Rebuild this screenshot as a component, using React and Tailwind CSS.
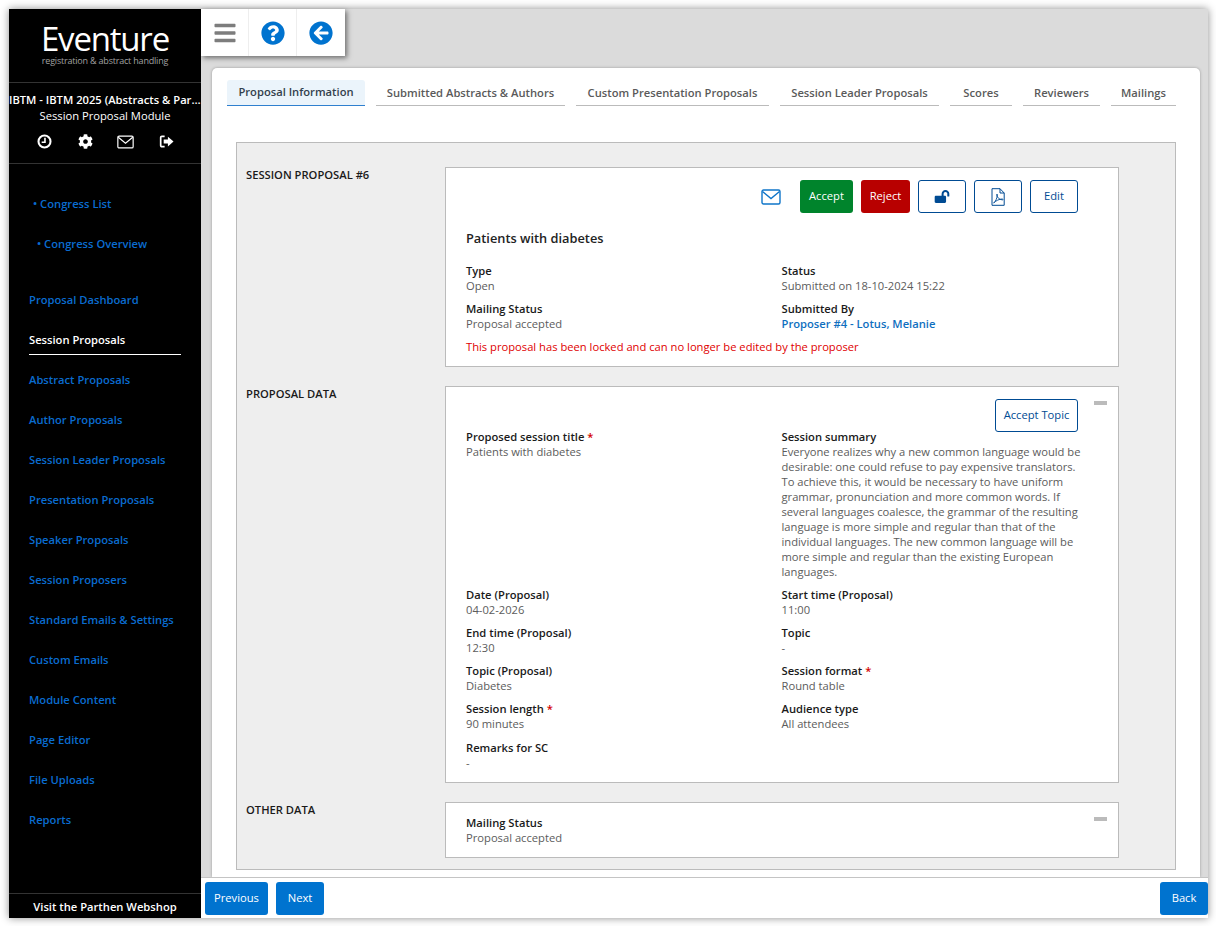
import React from "react";
import { FaBars, FaQuestionCircle, FaArrowCircleLeft, FaCog, FaLockOpen } from "react-icons/fa";

function Envelope({ className }) {
  return (
    <svg viewBox="0 0 20 16" className={className} fill="none" stroke="currentColor" strokeWidth="1.4">
      <rect x="1" y="1" width="18" height="14" rx="1.5" />
      <path d="M1.5 2.5 L10 9.5 L18.5 2.5" />
    </svg>
  );
}
function Clock({ className }) {
  return (
    <svg viewBox="0 0 16 16" className={className} fill="none" stroke="currentColor">
      <circle cx="8" cy="8" r="6.4" strokeWidth="2.2" />
      <path d="M8.5 4 V8.8 H5" strokeWidth="1.7" />
    </svg>
  );
}
function SignOut({ className }) {
  return (
    <svg viewBox="0 0 16 16" className={className}>
      <path d="M6 2.5 H3 A1.2 1.2 0 0 0 1.8 3.7 V12.3 A1.2 1.2 0 0 0 3 13.5 H6" fill="none" stroke="currentColor" strokeWidth="1.8" />
      <path d="M9.5 2.8 L15.5 8 L9.5 13.2 V10.2 H5 V5.8 H9.5 Z" fill="currentColor" />
    </svg>
  );
}
function Pdf({ className }) {
  return (
    <svg viewBox="0 0 14 18" className={className} fill="none" stroke="currentColor" strokeWidth="1">
      <path d="M1 .7 H9 L13.2 5 V17.3 H1 Z" />
      <path d="M9 .7 V5 H13.2" />
      <path d="M2.6 15 C4.6 13.6 6.2 10 6.3 6.8 C6.4 5.6 5.6 5.8 5.8 7 C6.2 9.6 8.4 11.8 11.6 11.9 C12.4 11.8 12.2 11 11.2 11 C8.4 11 5 12.6 2.6 15 Z" strokeWidth="0.9" />
    </svg>
  );
}

const nav = ["Proposal Dashboard", "Session Proposals", "Abstract Proposals", "Author Proposals", "Session Leader Proposals", "Presentation Proposals", "Speaker Proposals", "Session Proposers", "Standard Emails & Settings", "Custom Emails", "Module Content", "Page Editor", "File Uploads", "Reports"];
const tabs = [
  ["Submitted Abstracts & Authors", "w-[189px]"],
  ["Custom Presentation Proposals", "w-[193px]"],
  ["Session Leader Proposals", "w-[159px]"],
  ["Scores", "w-[62px]"],
  ["Reviewers", "w-[77px]"],
  ["Mailings", "w-[65px]"],
];

function Field({ label, req, children, className = "" }) {
  return (
    <div className={className}>
      <div className="font-semibold text-[#1a1a1a] leading-[15px]">
        {label}
        {req && <span className="text-[#d40000]"> *</span>}
      </div>
      <div className="text-[#5c5c5c] leading-[15px]">{children}</div>
    </div>
  );
}

function Section({ title, className, children }) {
  return (
    <div className="flex">
      <div className="w-[199px] font-semibold text-[#1a1a1a] leading-[15px] shrink-0">{title}</div>
      <div className={`relative w-[674px] bg-white border border-[#bbbbbb] ${className}`}>{children}</div>
    </div>
  );
}

export default function App() {
  return (
    <div className="w-[1216px] h-[926px] overflow-hidden bg-white p-[9px] text-[11.2px] font-['Open_Sans',sans-serif]">
      <div className="flex w-[1199px] h-[909px] shadow-[0_0_8px_rgba(0,0,0,0.45)]">
        <aside className="w-[192px] shrink-0 bg-black flex flex-col text-white">
          <div className="h-[74px] border-b border-[#333333] flex flex-col items-center pt-[12px]">
            <div className="text-[33px] leading-[36px] tracking-[-1.2px] font-medium text-white">Eventure</div>
            <div className="text-[9px] leading-[9px] mt-[-1px] text-[#a0a0a0] tracking-[-0.2px]">registration &amp; abstract handling</div>
          </div>
          <div className="h-[81px] border-b border-[#333333] flex flex-col items-center pt-[9px]">
            <div className="w-full text-center whitespace-nowrap overflow-hidden text-ellipsis font-semibold leading-[16px]">IBTM - IBTM 2025 (Abstracts &amp; Partners)</div>
            <div className="leading-[15px]">Session Proposal Module</div>
            <div className="flex w-full mt-[11px] pl-[15.5px] items-center">
              <div className="w-[40.5px] flex justify-center"><Clock className="w-[15px] h-[15px]" /></div>
              <div className="w-[40.5px] flex justify-center"><FaCog className="w-[15px] h-[15px]" /></div>
              <div className="w-[40.5px] flex justify-center"><Envelope className="w-[17px] h-[14px]" /></div>
              <div className="w-[40.5px] flex justify-center"><SignOut className="w-[15px] h-[15px]" /></div>
            </div>
          </div>
          <div className="pt-[20px] font-semibold text-[#0a6cd0] leading-[40px]">
            <div className="pl-[24px]">• Congress List</div>
            <div className="pl-[28px]">• Congress Overview</div>
          </div>
          <nav className="mt-[16px] flex-1 font-semibold text-[#0a6cd0]">
            {nav.map((n) => (
              <div key={n} className="h-[40px] pl-[20px] flex items-center">
                {n === "Session Proposals" ? (
                  <span className="block w-[152px] h-[30px] leading-[30px] text-white border-b border-white">{n}</span>
                ) : (
                  <span>{n}</span>
                )}
              </div>
            ))}
          </nav>
          <div className="h-[25px] border-t border-[#333333] text-center font-semibold leading-[25px] text-white">Visit the Parthen Webshop</div>
        </aside>

        <div className="relative flex-1 bg-[#dbdbdb] flex flex-col min-w-0">
          <div className="absolute left-0 top-0 w-[144px] h-[47px] bg-white flex shadow-[2px_2px_5px_rgba(0,0,0,0.5)] z-10">
            <div className="w-[48px] flex items-center justify-center border-r border-[#eeeeee]"><FaBars className="w-[22px] h-[24px] text-[#7d7d7d]" /></div>
            <div className="w-[48px] flex items-center justify-center border-r border-[#eeeeee]"><FaQuestionCircle className="w-[24px] h-[24px] text-[#0073cf]" /></div>
            <div className="w-[48px] flex items-center justify-center"><FaArrowCircleLeft className="w-[24px] h-[24px] text-[#0073cf]" /></div>
          </div>

          <div className="flex-1 min-h-0 pt-[59px] pl-[11px] pr-[8px]">
            <div className="h-full bg-white rounded-t-[5px] shadow-[0_0_3px_rgba(0,0,0,0.3)] pt-[12px] pl-[15px] overflow-hidden">
              <div className="flex gap-[11px] items-end h-[26px] text-[#5a5a5a] font-semibold">
                <div className="w-[138px] h-[26px] bg-[#ebf4fb] rounded-t-[3px] border-b border-[#2f80cf] text-center leading-[24px] text-[#333f4d]">Proposal Information</div>
                {tabs.map(([t, w]) => (
                  <div key={t} className={`${w} h-[26px] border-b border-[#bbbbbb] text-center leading-[26px]`}>{t}</div>
                ))}
              </div>

              <div className="mt-[36px] ml-[9px] w-[940px] h-[728px] bg-[#eeeeee] border border-[#bbbbbb] pt-[24px] pl-[9px] flex flex-col gap-[19px]">
                <Section title="SESSION PROPOSAL #6" className="h-[200px] px-[20px] pt-[12px]">
                  <div className="flex items-center h-[33px] pl-[295px]">
                    <Envelope className="w-[20px] h-[16px] text-[#0f75c9]" />
                    <button className="ml-[19px] w-[53px] h-[33px] bg-[#00842c] rounded-[3px] text-white">Accept</button>
                    <button className="ml-[8px] w-[49px] h-[33px] bg-[#b80000] rounded-[3px] text-white">Reject</button>
                    <button className="ml-[8px] w-[48px] h-[33px] border border-[#004b93] rounded-[3px] flex items-center justify-center text-[#004b93]"><FaLockOpen className="w-[16px] h-[13px]" /></button>
                    <button className="ml-[8px] w-[48px] h-[33px] border border-[#004b93] rounded-[3px] flex items-center justify-center text-[#004b93]"><Pdf className="w-[14px] h-[18px]" /></button>
                    <button className="ml-[8px] w-[48px] h-[33px] border border-[#004b93] rounded-[3px] text-[#004b93]">Edit</button>
                  </div>
                  <div className="mt-[16px] text-[12.8px] font-semibold text-[#222222] leading-[18px]">Patients with diabetes</div>
                  <div className="mt-[16px] grid grid-cols-[315.5px_1fr] gap-y-[8px]">
                    <Field label="Type">Open</Field>
                    <Field label="Status">Submitted on 18-10-2024 15:22</Field>
                    <Field label="Mailing Status">Proposal accepted</Field>
                    <Field label="Submitted By"><span className="font-semibold text-[#0f6fc0]">Proposer #4 - Lotus, Melanie</span></Field>
                  </div>
                  <div className="mt-[8px] text-[#e00000] leading-[15px]">This proposal has been locked and can no longer be edited by the proposer</div>
                </Section>

                <Section title="PROPOSAL DATA" className="h-[397px] px-[20px] pt-[12px]">
                  <div className="absolute right-[11px] top-[14px] w-[13px] h-[4px] bg-[#bbbbbb]"></div>
                  <div className="flex justify-end pr-[20px]">
                    <button className="w-[83px] h-[33px] border border-[#004b93] rounded-[3px] text-[#004b93]">Accept Topic</button>
                  </div>
                  <div className="mt-[-3px] grid grid-cols-[315.5px_1fr] gap-y-[8px]">
                    <Field label="Proposed session title" req>Patients with diabetes</Field>
                    <Field label="Session summary" className="w-[305px]">Everyone realizes why a new common language would be desirable: one could refuse to pay expensive translators. To achieve this, it would be necessary to have uniform grammar, pronunciation and more common words. If several languages coalesce, the grammar of the resulting language is more simple and regular than that of the individual languages. The new common language will be more simple and regular than the existing European languages.</Field>
                    <Field label="Date (Proposal)">04-02-2026</Field>
                    <Field label="Start time (Proposal)">11:00</Field>
                    <Field label="End time (Proposal)">12:30</Field>
                    <Field label="Topic">-</Field>
                    <Field label="Topic (Proposal)">Diabetes</Field>
                    <Field label="Session format" req>Round table</Field>
                    <Field label="Session length" req>90 minutes</Field>
                    <Field label="Audience type">All attendees</Field>
                    <Field label="Remarks for SC" className="mt-[1px]">-</Field>
                  </div>
                </Section>

                <Section title="OTHER DATA" className="h-[56px] px-[20px] pt-[12px]">
                  <div className="absolute right-[11px] top-[14px] w-[13px] h-[4px] bg-[#bbbbbb]"></div>
                  <Field label="Mailing Status">Proposal accepted</Field>
                </Section>
              </div>
            </div>
          </div>

          <div className="h-[41px] shrink-0 bg-white border-t border-[#c4c4c4] flex items-start pt-[4px] pl-[4px] gap-[8px] relative z-10">
            <button className="w-[63px] h-[33px] bg-[#0073cf] rounded-[3px] text-white">Previous</button>
            <button className="w-[48px] h-[33px] bg-[#0073cf] rounded-[3px] text-white">Next</button>
            <button className="ml-auto w-[48px] h-[33px] bg-[#0073cf] rounded-[3px] text-white">Back</button>
          </div>
        </div>
      </div>
    </div>
  );
}
